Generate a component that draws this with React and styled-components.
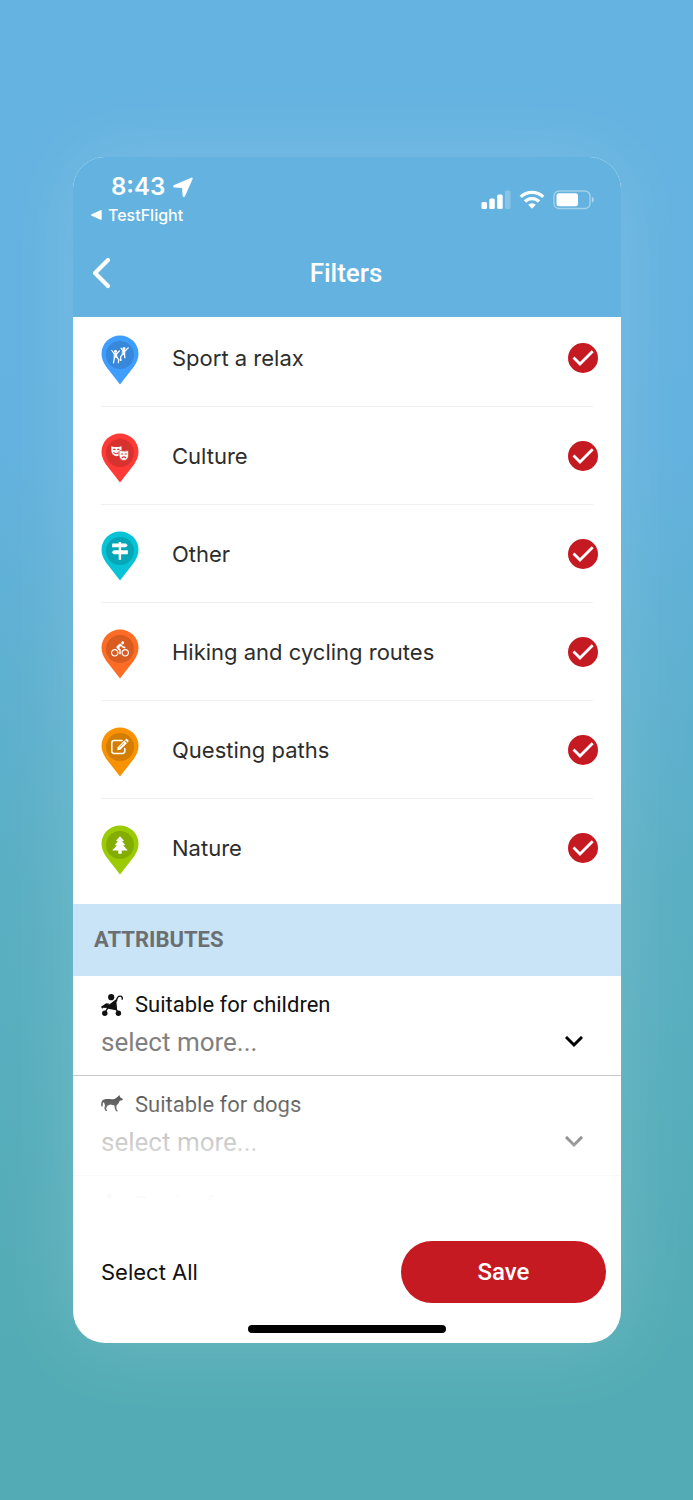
import React, { useState } from 'react';
import styled, { createGlobalStyle } from 'styled-components';
import { FaWheelchair } from 'react-icons/fa';
import { MdDirectionsBike } from 'react-icons/md';

const categories = [
  { id: 'sport', name: 'Sport a relax', color: '#3f9dfd', inner: '#3787da', Icon: PeopleIcon },
  { id: 'culture', name: 'Culture', color: '#fd3a36', inner: '#d8322f', Icon: MasksIcon },
  { id: 'other', name: 'Other', color: '#08c3d6', inner: '#07a6b7', Icon: SignpostIcon },
  { id: 'routes', name: 'Hiking and cycling routes', color: '#fd6c25', inner: '#d85c20', Icon: MdDirectionsBike },
  { id: 'quest', name: 'Questing paths', color: '#f99203', inner: '#d47d03', Icon: PencilIcon },
  { id: 'nature', name: 'Nature', color: '#9bcb05', inner: '#84ad04', Icon: TreeIcon }
];

const attributes = [
  { id: 'children', name: 'Suitable for children', Icon: StrollerIcon },
  { id: 'dogs', name: 'Suitable for dogs', Icon: DogIcon },
  { id: 'barrier', name: 'Barrier-free', Icon: FaWheelchair }
];

function App() {
  const [checked, setChecked] = useState(categories.map((c) => c.id));

  const toggle = (id) => {
    setChecked(checked.includes(id) ? checked.filter((c) => c !== id) : [...checked, id]);
  };

  return (
    <Page>
      <GlobalStyle />
      <Phone>
        <Header>
          <StatusBar>
            <div>
              <Time>
                8:43
                <svg width="20" height="20" viewBox="0 0 20 20" fill="#fff">
                  <path d="M18.300.7 1.200 8.100C0 8.600-.1 10.400 1.500 10.600l7.200.5c.3 0 .4.200.4.400l.5 7.200c.1 1.500 1.900 1.700 2.500.4L19.600 2C20 1.100 19.200.300 18.300.7z" />
                </svg>
              </Time>
              <ReturnLink href="#">
                <svg width="11" height="10" viewBox="0 0 11 10" fill="#fff">
                  <path d="M.6 4.300 9.500.2c.7-.3 1.200 0 1.200.7v8.200c0 .7-.5 1-1.200.7L.6 5.700c-.8-.4-.8-1 0-1.400z" />
                </svg>
                TestFlight
              </ReturnLink>
            </div>
            <StatusIcons />
          </StatusBar>
          <NavBar>
            <BackButton type="button" aria-label="Back">
              <svg width="20" height="32" viewBox="0 0 20 32" fill="none" stroke="#fff">
                <path d="M17 3 4 16l13 13" strokeWidth="4.200" strokeLinecap="round" strokeLinejoin="round" />
              </svg>
            </BackButton>
            <Title>Filters</Title>
          </NavBar>
        </Header>

        <CategoryList>
          {categories.map(({ id, name, color, inner, Icon }) => (
            <CategoryRow key={id}>
              <Pin>
                <svg width="38" height="50" viewBox="0 0 38 50">
                  <path
                    d="M19 .5C8.700.5.500 8.700.500 18.800c0 4.700 2 9 4.500 12.800L19 49.500l14-17.900c2.500-3.800 4.500-8.100 4.500-12.800C37.500 8.700 29.300.5 19 .5z"
                    fill={color}
                  />
                  <circle cx="19" cy="20" r="14" fill={inner} />
                </svg>
                <PinGlyph>
                  <Icon size={18} />
                </PinGlyph>
              </Pin>
              <CategoryName htmlFor={id}>{name}</CategoryName>
              <Check>
                <input type="checkbox" id={id} checked={checked.includes(id)} onChange={() => toggle(id)} />
                <svg width="30" height="30" viewBox="0 0 30 30" fill="none" stroke="#fff">
                  <path d="m6.500 15.500 5.500 5.500L23.700 9.300" strokeWidth="2.800" strokeLinecap="square" />
                </svg>
              </Check>
            </CategoryRow>
          ))}
        </CategoryList>

        <SectionTitle>ATTRIBUTES</SectionTitle>
        <Attributes>
          {attributes.map(({ id, name, Icon }) => (
            <AttributeRow key={id}>
              <AttributeLabel htmlFor={id}>
                <Icon size={22} />
                {name}
              </AttributeLabel>
              <SelectWrapper>
                <Select id={id} defaultValue="">
                  <option value="">select more...</option>
                </Select>
                <svg width="18" height="12" viewBox="0 0 18 12" fill="none" stroke="#000">
                  <path d="m2 2 7 7 7-7" strokeWidth="3" strokeLinecap="square" />
                </svg>
              </SelectWrapper>
            </AttributeRow>
          ))}
          <Fade />
        </Attributes>

        <Footer>
          <SelectAllButton type="button" onClick={() => setChecked(categories.map((c) => c.id))}>
            Select All
          </SelectAllButton>
          <SaveButton type="button">Save</SaveButton>
        </Footer>
        <HomeBar />
      </Phone>
    </Page>
  );
}

// icons

function StatusIcons() {
  return (
    <svg width="113" height="20" viewBox="0 0 113 20" fill="#fff">
      <rect x="0.500" y="12" width="5.500" height="7" rx="1.500" />
      <rect x="8.300" y="8.500" width="5.500" height="10.500" rx="1.500" />
      <rect x="16.200" y="4.500" width="5.500" height="14.500" rx="1.500" />
      <rect x="24" y="0.500" width="5.500" height="18.500" rx="1.500" opacity="0.25" />
      <g fill="none" stroke="#fff" strokeWidth="3.400">
        <path d="M39.800 6.900a16 16 0 0 1 22.400 0" />
        <path d="M44 11.500a10 10 0 0 1 14 0" />
      </g>
      <path d="M47.200 14.800a5.500 5.500 0 0 1 7.600 0L51 18.800z" />
      <rect x="73" y="1" width="36" height="17.500" rx="5" fill="none" stroke="#fff" strokeWidth="1.400" opacity="0.4" />
      <rect x="75.500" y="3.200" width="21.500" height="13" rx="2.500" />
      <path d="M110.800 6.800c2.600.8 2.600 5 0 5.800z" opacity="0.5" />
    </svg>
  );
}

function PeopleIcon({ size }) {
  return (
    <svg width={size} height={size} viewBox="0 0 18 18" fill="none" stroke="currentColor" strokeLinecap="round">
      <circle cx="4.500" cy="5.200" r="1.500" fill="currentColor" stroke="none" />
      <circle cx="13" cy="2.500" r="1.500" fill="currentColor" stroke="none" />
      <path d="M.8 4.500 3 7.300h3L8.400 5M10 2.200l1.700 2.400h2.700L17.300 1.800" strokeWidth="1.200" />
      <path d="M3.200 7.500h2.700l.2 4H3.300zM11.600 5h2.600l-.4 3.600h-2.500z" fill="currentColor" strokeWidth=".5" />
      <path d="m3.500 11-1 5.800M5.800 11.300l2 2.300-.5 3M11.600 8.300 9.800 10.500l-.2 2M13.500 8.300l.4 3.500" strokeWidth="1.300" />
      <circle cx="9.800" cy="14" r="1.100" fill="currentColor" stroke="none" />
    </svg>
  );
}

function MasksIcon({ size }) {
  return (
    <svg width={size} height={size} viewBox="0 0 18 18">
      <path
        d="M.3 2.200c3.400 1.200 6.800 1.200 10.200 0V7c0 3-2 5-5.100 5.300C2.300 11.500.3 9.500.3 6.500z"
        fill="currentColor"
      />
      <path
        d="M8 7.600c.3-.7 1-1.100 1.700-1 2.600.6 5 .6 7.900 0v4.600c0 3-2 5.300-4.700 5.300-2.800 0-4.900-2.300-4.900-5.300z"
        fill="currentColor"
        stroke="#d8322f"
        strokeWidth=".8"
      />
      <g fill="none" stroke="#d8322f" strokeWidth="1.100" strokeLinecap="round">
        <path d="M2.600 5.400h1.300M6.700 5.400H8M2.900 8.500c1.200 1.500 3 1.600 4.200.3M10.300 10h1.300M14 10h1.300M11 13.800c1.100-1.300 2.700-1.300 3.800 0" />
      </g>
    </svg>
  );
}

function SignpostIcon({ size }) {
  return (
    <svg width={size} height={size} viewBox="0 0 18 18" fill="currentColor">
      <path d="M7.700.3c0-.3.500-.5 1.200-.5s1.200.2 1.200.5v17.500H7.700z" />
      <path d="M1.700 1.500h13.200l1.800 1.900-1.800 1.900H1.700c-.4 0-.6-.2-.6-.6V2.100c0-.4.2-.6.600-.6z" />
      <path d="M16.300 8.200H2.700L.7 10.200l2 2h13.600c.4 0 .6-.2.600-.6V8.800c0-.4-.2-.6-.6-.6z" />
    </svg>
  );
}

function PencilIcon({ size }) {
  return (
    <svg width={size} height={size} viewBox="0 0 18 18" fill="none" stroke="currentColor">
      <path
        d="M11 2.500H3.200C1.800 2.500.8 3.500.8 4.900v8.200c0 1.400 1 2.400 2.400 2.400h8.200c1.400 0 2.400-1 2.400-2.400V10.500"
        strokeWidth="1.500"
        strokeLinecap="round"
      />
      <path d="m13.300 2.600 2.600 2.600-6.600 6.600-3.100.5.500-3.100z" fill="currentColor" stroke="none" />
      <path d="m14 1.900.8-.8c.4-.4.900-.4 1.300 0l1.300 1.300c.4.4.4.9 0 1.300l-.8.800z" fill="currentColor" stroke="none" />
      <path d="m8.200 9.600 4.700-4.700" stroke="#d47d03" strokeWidth=".7" />
    </svg>
  );
}

function TreeIcon({ size }) {
  return (
    <svg width={size} height={size} viewBox="0 0 18 18" fill="currentColor">
      <path d="M9 .2 13 4.700l-1.900.5 3.100 3.700-2 .6 4 4.200c.4.400.2.900-.4.900h-5.100l.1 2.500c0 .4-.2.600-.6.600H7.800c-.4 0-.6-.2-.6-.6l.1-2.500H2.200c-.6 0-.8-.5-.4-.9l4-4.200-2-.6 3.100-3.700L5 4.700z" />
    </svg>
  );
}

function StrollerIcon({ size }) {
  return (
    <svg width={size} height={size} viewBox="0 0 22 22" fill="currentColor">
      <circle cx="10.200" cy="3.200" r="3.100" />
      <circle cx="3.800" cy="19.200" r="2.700" />
      <circle cx="17.400" cy="19.200" r="2.700" />
      <path d="M15.200 5.200 16.200 16.500 6 14.500 4 12.500l4.500-2.200z" />
      <path d="M0 12.800 5.200 9.200l3.300.6-4 4.200-2.300-.2-1 1z" />
      <path
        d="m7 13.500-3.200 5.700M15 15l2.400 4.200M15.500 7c.3-3 1.800-5 3.900-4.900 1.500.1 2.200 1.400 1.800 3"
        fill="none"
        stroke="currentColor"
        strokeWidth="1.400"
        strokeLinecap="round"
      />
    </svg>
  );
}

function DogIcon({ size }) {
  return (
    <svg width={size} height={size} viewBox="0 0 22 22" fill="currentColor">
      <path d="M18.300 1 19 3l1.200 1L22 5l-.7 1.200-2.600.6-1.400 3-1.800 1.700-.1 3.300 1.600 2.500h-1.800l-1.300-2.300-.5-3.500-4.100-.9-2.900 1.200-1.300 2.400 1 2.700H4.600l-1.300-2.600.7-2.800L3 8.200c-1.200.3-1.300 1.300-1.200 3L1.200 13l-1-1.300C.1 8 1.300 5.200 4.200 5.200c3.300-.3 6.500.4 9.300-.2l3.100-2z" />
    </svg>
  );
}

// styles

const GlobalStyle = createGlobalStyle`
  * {
    box-sizing: border-box;
  }
  body {
    margin: 0;
    font-family: Roboto, sans-serif;
  }
  button, select {
    font-family: inherit;
    border: none;
    background: none;
    padding: 0;
    cursor: pointer;
  }
  svg {
    display: block;
  }
`;

const Page = styled.div`
  min-height: 100vh;
  padding: 157px 72px 157px 73px;
  background: linear-gradient(#65b3e1 0%, #63b2df 30%, #5aafc2 60%, #53acb5 90%);
`;

const Phone = styled.main`
  overflow: hidden;
  border-radius: 32px;
  background-color: #fff;
  box-shadow: 0 0 80px rgba(255, 255, 255, 0.16);
`;

const Header = styled.header`
  height: 160px;
  color: #fff;
  background-color: #63b2df;
`;

const StatusBar = styled.div`
  height: 73px;
  padding: 16px 27px 0 18px;
  display: flex;
  justify-content: space-between;

  & > svg {
    margin-top: 17px;
  }
`;

const Time = styled.div`
  display: flex;
  align-items: center;
  gap: 8px;
  padding-left: 20px;
  font: 600 24px/28px Inter, sans-serif;
`;

const ReturnLink = styled.a`
  display: flex;
  align-items: center;
  gap: 6px;
  margin-top: 4px;
  color: #fff;
  font: 500 16px/20px Inter, sans-serif;
  text-decoration: none;
`;

const NavBar = styled.div`
  height: 86px;
  padding: 0 20px 0 18px;
  display: grid;
  grid-template-columns: 20px 1fr 20px;
  align-items: center;
`;

const BackButton = styled.button`
  width: 20px;
`;

const Title = styled.h1`
  margin: 0;
  text-align: center;
  font-size: 26px;
  font-weight: 500;
`;

const CategoryList = styled.ul`
  margin: 0;
  padding: 0 23px 7px 28px;
  list-style: none;
`;

const CategoryRow = styled.li`
  display: flex;
  align-items: center;
  padding: 26px 0;
  background: linear-gradient(#f0f0f0, #f0f0f0) left bottom / calc(100% - 5px) 1px no-repeat;

  &:first-child {
    padding-top: 18px;
  }
  &:last-child {
    background: none;
  }
`;

// the tip of the pin hangs below the text line
const Pin = styled.div`
  position: relative;
  width: 38px;
  height: 46px;
`;

const PinGlyph = styled.span`
  position: absolute;
  top: 11px;
  left: 10px;
  color: #fff;
`;

const CategoryName = styled.label`
  flex: 1;
  padding-left: 33px;
  color: #2d2d2d;
  font: 400 22px/30px Inter, sans-serif;
`;

const Check = styled.span`
  position: relative;

  & > input {
    appearance: none;
    display: block;
    width: 30px;
    height: 30px;
    margin: 0;
    border-radius: 50%;
    border: 2px solid #c61a22;
  }
  & > input:checked {
    background-color: #c61a22;
  }
  & > svg {
    position: absolute;
    inset: 0;
    pointer-events: none;
  }
`;

const SectionTitle = styled.h2`
  margin: 0;
  padding: 0 21px;
  color: #6b6f72;
  background-color: #c8e4f6;
  font-size: 22px;
  font-weight: 700;
  line-height: 72px;
`;

const Attributes = styled.div`
  position: relative;
  height: 224px;
  overflow: hidden;
`;

const AttributeRow = styled.div`
  height: 100px;
  padding: 15px 38px 0 28px;
  border-bottom: 1px solid #c8c8c8;
`;

const AttributeLabel = styled.label`
  display: flex;
  align-items: center;
  gap: 12px;
  color: #111;
  font-size: 22px;
  line-height: 28px;
`;

const SelectWrapper = styled.div`
  display: flex;
  align-items: center;
  margin-top: 7px;

  & > svg {
    margin-left: -18px;
    pointer-events: none;
  }
`;

const Select = styled.select`
  appearance: none;
  flex: 1;
  color: #808080;
  font-size: 26px;
  line-height: 32px;
`;

// 아래로 갈수록 흐려지는 효과
const Fade = styled.div`
  position: absolute;
  inset: 100px 0 0;
  pointer-events: none;
  background: linear-gradient(
    rgba(255, 255, 255, 0.1),
    rgba(255, 255, 255, 0.36) 28px,
    rgba(255, 255, 255, 0.6) 66px,
    rgba(255, 255, 255, 0.88) 99px,
    rgba(255, 255, 255, 0.96) 118px,
    #fff
  );
`;

const Footer = styled.footer`
  display: flex;
  justify-content: space-between;
  align-items: center;
  padding: 41px 15px 0 28px;
`;

const SelectAllButton = styled.button`
  color: #111;
  font: 400 22px/30px Inter, sans-serif;
`;

const SaveButton = styled.button`
  flex: 0 1 205px;
  height: 62px;
  border-radius: 31px;
  color: #fff;
  background-color: #c61a22;
  font-size: 24px;
  font-weight: 500;
`;

const HomeBar = styled.div`
  width: 36%;
  height: 8px;
  margin: 22px auto 10px;
  border-radius: 4px;
  background-color: #000;
`;

export default App;
